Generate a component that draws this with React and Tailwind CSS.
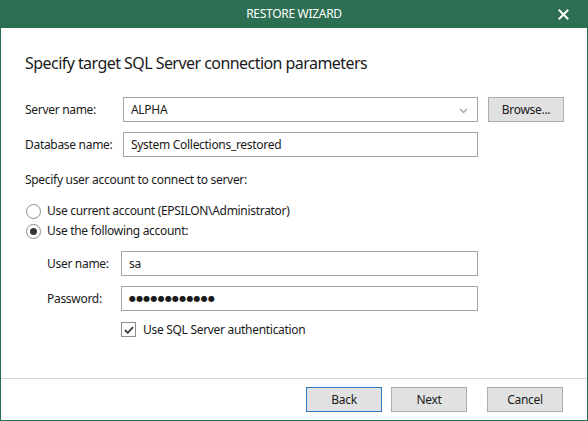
import React from "react";

const font = { fontFamily: '"Noto Sans", "Open Sans", sans-serif' };

function Input({ children, className = "" }) {
  return (
    <div className={`h-[25px] border border-[#a5a5a5] bg-white flex items-center pl-[7px] text-[12px] tracking-[-0.3px] text-[#1a1a1a] ${className}`}>
      {children}
    </div>
  );
}

function Btn({ children, primary, className = "" }) {
  return (
    <button
      className={`h-[25px] w-[76px] bg-[#e1e1e1] border ${primary ? "border-[#2f78c0]" : "border-[#adadad]"} text-[12px] tracking-[-0.3px] text-[#1a1a1a] flex items-center justify-center ${className}`}
    >
      {children}
    </button>
  );
}

function Radio({ checked }) {
  return (
    <div className="w-[15px] h-[15px] rounded-full border border-[#8c8c8c] bg-white flex items-center justify-center">
      {checked && <div className="w-[7px] h-[7px] rounded-full bg-[#333]" />}
    </div>
  );
}

export default function App() {
  return (
    <div style={font} className="w-[588px] h-[421px] bg-white border border-t-0 border-[#2b6e51] flex flex-col text-[#1a1a1a] text-[12px] tracking-[-0.3px]">
      <div className="h-[28px] bg-[#2b6e51] -mx-[1px] relative flex items-center justify-center text-white text-[12px]">
        <span>RESTORE WIZARD</span>
        <svg className="absolute left-[558px] top-[9px]" width="11" height="11" viewBox="0 0 11 11">
          <path d="M1.5 1.5 L9.5 9.5 M9.5 1.5 L1.5 9.5" stroke="white" strokeWidth="2" strokeLinecap="square" />
        </svg>
      </div>
      <div className="flex-1 pl-[24px]">
        <h1 className="mt-[24px] text-[16px] leading-[22px] tracking-[-0.55px] text-[#1a1a1a]">Specify target SQL Server connection parameters</h1>
        <div className="mt-[23px] flex items-center">
          <div className="w-[98px]">Server name:</div>
          <Input className="w-[355px] relative">
            ALPHA
            <svg className="absolute right-[9px] top-[10px]" width="9" height="6" viewBox="0 0 9 6">
              <path d="M1 1 L4.5 4.5 L8 1" stroke="#a8a8a8" strokeWidth="1.5" fill="none" />
            </svg>
          </Input>
          <Btn className="ml-[10px]">Browse...</Btn>
        </div>
        <div className="mt-[10px] flex items-center">
          <div className="w-[98px]">Database name:</div>
          <Input className="w-[355px]">System Collections_restored</Input>
        </div>
        <div className="mt-[15px] leading-[16px]">Specify user account to connect to server:</div>
        <div className="mt-[15px] flex items-center h-[16px] pl-[1px]">
          <Radio />
          <span className="ml-[6px]">Use current account (EPSILON\Administrator)</span>
        </div>
        <div className="mt-[4px] flex items-center h-[16px] pl-[1px]">
          <Radio checked />
          <span className="ml-[6px]">Use the following account:</span>
        </div>
        <div className="mt-[12px] pl-[22px] flex items-center">
          <div className="w-[74px]">User name:</div>
          <Input className="w-[357px]">sa</Input>
        </div>
        <div className="mt-[10px] pl-[22px] flex items-center">
          <div className="w-[74px]">Password:</div>
          <Input className="w-[357px]">
            <span className="text-[8px] tracking-[0.2px]" style={{ fontFamily: '"DejaVu Sans", sans-serif' }}>●●●●●●●●●●●●</span>
          </Input>
        </div>
        <div className="mt-[11px] ml-[96px] flex items-center h-[15px]">
          <div className="w-[15px] h-[15px] border border-[#8c8c8c] bg-white flex items-center justify-center">
            <svg width="10" height="8" viewBox="0 0 10 8">
              <path d="M1 4 L3.8 6.8 L9 1.2" stroke="#3a3a3a" strokeWidth="1.8" fill="none" />
            </svg>
          </div>
          <span className="ml-[7px]">Use SQL Server authentication</span>
        </div>
      </div>
      <div className="h-[42px] border-t border-[#d6d6d6] flex items-start justify-end pt-[8px] pr-[24px]">
        <Btn primary>Back</Btn>
        <Btn className="ml-[9px]">Next</Btn>
        <Btn className="ml-[20px]">Cancel</Btn>
      </div>
    </div>
  );
}
